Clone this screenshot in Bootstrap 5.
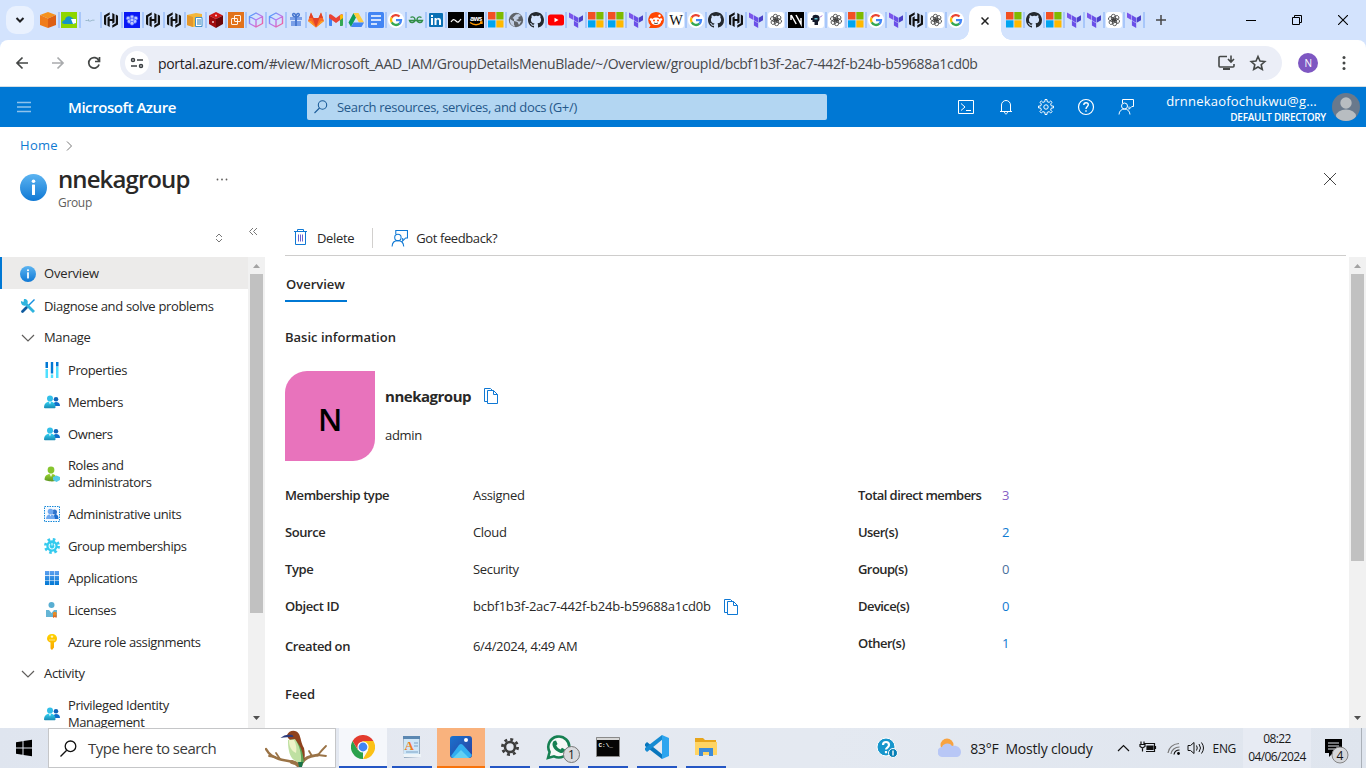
<!DOCTYPE html>
<html lang="en">
<head>
<meta charset="utf-8">
<title>nnekagroup - Microsoft Azure</title>
<link href="https://cdn.jsdelivr.net/npm/bootstrap@5.3.0/dist/css/bootstrap.min.css" rel="stylesheet">
<style>
html,body{height:768px;overflow:hidden}
body{font-family:"Open Sans","Noto Sans",sans-serif;font-size:13px;line-height:17px;letter-spacing:-.33px;color:#292827;width:1366px}
svg{display:block;flex:none}
/* browser chrome */
.tabstrip,.navwrap,.azbar,.crumbs,.bladehead,.sidetools,.cmdbar,.taskbar{flex:none}
.tabstrip{height:40px;background:#d3e3fd}
.tabsearch{width:28px;height:28px;border-radius:10px;background:#e9f1fe;margin:0 6px}
.fav{width:20px;height:16px;position:relative}
.fav.wide{width:21px}
.fav::after{content:"";position:absolute;right:1px;top:0;width:2px;height:16px;background:#a8c7fa}
.fav.last::after{display:none}
.livetab{width:32px;height:34px;margin-left:1px;margin-right:5px;background:#fff;border-radius:10px 10px 0 0;align-self:flex-end;position:relative}
.livetab::before,.livetab::after{content:"";position:absolute;bottom:0;width:10px;height:10px}
.livetab::before{left:-10px;background:radial-gradient(circle at 0 0,transparent 9.5px,#fff 10px)}
.livetab::after{right:-10px;background:radial-gradient(circle at 100% 0,transparent 9.5px,#fff 10px)}
.navwrap{height:46px;background:#d3e3fd}
.navrow{height:46px;background:#fff;border-radius:8px 8px 0 0}
.omnibox{width:1162px;height:34px;border-radius:17px;background:#ebeef7}
.siteinfo{width:24px;height:24px;background:#fff}
.urltext{font-size:14px;letter-spacing:-.32px;color:#46484b;padding-left:1px}
.urltext b{font-weight:400;color:#1f2023}
.profile{width:20px;height:20px;background:#7e57c2;color:#fff;font-size:10px}
/* portal header */
.azbar{height:41px;background:#0078d4;border-top:1px solid #d4dfe6;color:#fff}
.brandname{font-size:15px;font-weight:600;letter-spacing:-.44px;width:239px}
.azsearch{width:520px;height:26px;background:#b3d6f2;border-radius:2px;color:#25588a;letter-spacing:-.32px}
.aztools{gap:20px}
.acct{width:160px;line-height:14px;padding-top:3px;letter-spacing:.2px}
.acct .dir{font-size:10px;font-weight:600;letter-spacing:-.28px;padding-top:2px}
.azlink{color:#0f7ad2}
.crumbs{height:37px}
.bladehead{height:55px}
.bladehead h1{font-size:24px;font-weight:600;line-height:30px;letter-spacing:-.9px;color:#292827;width:153px}
.subtle{font-size:12px;line-height:16px;color:#605e5c;padding-top:1px}
/* side menu */
.sidecol{width:265px}
.sidetools{height:38px;padding-left:215px}
.sidelist{width:248px}
.menurow{height:32px;padding-left:20px;gap:8px;flex:none}
.menurow.child{padding-left:44px;letter-spacing:-.4px}
.menurow.tall{height:48px}
.menurow.group{padding-bottom:1px}
.menurow.picked{background:#ecebea;box-shadow:inset 2px 0 #0078d4;margin-bottom:1px;padding-top:1px;letter-spacing:-.17px;font-weight:500}
.track{width:17px;background:#f1f1f1;padding:2px 0 2px}
.thumb{width:13px;background:#c1c1c1}
.t1{height:339px}.t2{height:287px}
/* content */
.cmdbar{height:37px;border-bottom:1px solid #cecdcc;margin:0 20px 1px;width:1061px;padding-top:2px}
.vrule{width:1px;height:20px;background:#d2d0ce;margin:0 18px}
.semi{font-weight:600;letter-spacing:-.42px}
.sectionhead{font-weight:600;letter-spacing:0}
.pivot{width:62px;height:30px;border-bottom:2px solid #0078d4;padding:4px 0 0 1px;margin-top:15px;font-weight:600;letter-spacing:0;white-space:nowrap}
.avatarbox{width:90px;height:90px;background:#e873bc;border-radius:22px 0 22px 0;font-size:31px;font-weight:600;color:#000;padding-top:6px}
.groupname{font-size:15px;font-weight:700;letter-spacing:-.48px;padding-top:2px}
.facts{grid-template-columns:188px 1fr;grid-auto-rows:37px;width:573px}
.facts .lower{padding-top:6px}
.objid{letter-spacing:-.22px}
.counts{grid-template-columns:144px 1fr;grid-auto-rows:37px}
.counts .semi{letter-spacing:-.56px}
/* taskbar */
.taskbar{height:40px;background:linear-gradient(100deg,#dfe5ef,#e5e9f1 35%,#e4e9f1 60%,#dfe5ee);color:#191919}
.winsearch{width:288px;height:40px;background:#fff;border:1px solid #c5c6c8;font-size:15px;letter-spacing:-.52px;color:#3b3b3b;padding-left:11px;gap:11px}
.tasks{gap:9px;margin-left:7px}
.task{width:40px;height:40px;border-bottom:2px solid #2456c4;padding-bottom:1px;position:relative}
.task.focus{width:48px;margin:0 -4px;background:#f5f7fb}
.task.hot{width:48px;margin:0 -4px;background:#f9b27d;border-color:#f7730c}
.taskcount{position:absolute;left:24px;top:18px;width:17px;height:17px;background:#d9dade;border:1px solid #777;font-size:12px;letter-spacing:0}
.weather{font-size:14px;letter-spacing:-.2px}
.clock{width:68px;height:40px;font-size:12px;line-height:18px;letter-spacing:-.6px;background:#e7ebf3;padding-top:2px}
</style>
</head>
<body class="d-flex flex-column bg-white">

<svg width="0" height="0" class="position-absolute">
<defs>
<linearGradient id="gInfo" x1="0" y1="0" x2="0" y2="1"><stop offset="0" stop-color="#5cb4f1"/><stop offset="1" stop-color="#0f78d4"/></linearGradient>
<linearGradient id="gCyan" x1="0" y1="0" x2="0" y2="1"><stop offset="0" stop-color="#32d4f5"/><stop offset="1" stop-color="#198ab3"/></linearGradient>
<linearGradient id="gGreen" x1="0" y1="0" x2="0" y2="1"><stop offset="0" stop-color="#9ad52f"/><stop offset="1" stop-color="#5e9624"/></linearGradient>
<linearGradient id="gApp" x1="0" y1="0" x2="0" y2="1"><stop offset="0" stop-color="#5ea0ef"/><stop offset="1" stop-color="#0078d4"/></linearGradient>
<linearGradient id="gKey" x1="0" y1="0" x2="0" y2="1"><stop offset="0" stop-color="#ffd400"/><stop offset="1" stop-color="#f9a500"/></linearGradient>
<linearGradient id="gCube" x1="0" y1="0" x2="1" y2="1"><stop offset="0" stop-color="#32a8ff"/><stop offset=".5" stop-color="#b678f0"/><stop offset="1" stop-color="#ff5d8a"/></linearGradient>
<linearGradient id="gPhoto" x1="0" y1="0" x2="1" y2="1"><stop offset="0" stop-color="#1a73cf"/><stop offset="1" stop-color="#2b3f9e"/></linearGradient>
</defs>
<symbol id="f-box" viewBox="0 0 16 16"><path fill="#f6921e" d="M8 0l8 3-8 3.600L0 3z"/><path fill="#f07c1a" d="M0 3l8 3.600V16l-8-3z"/><path fill="#dd5f14" d="M16 3L8 6.600V16l8-3z"/></symbol>
<symbol id="f-green" viewBox="0 0 16 16"><path fill="#8ed600" d="M0 0h16v16H0z"/><path fill="#1693c9" d="M1 11c0-2 2-3 3-3 0-3 4-5 6-3l4 3v4H3z"/><path fill="#fff" d="M10 7h5v4l-3 1z"/></symbol>
<symbol id="f-wave" viewBox="0 0 16 16"><path stroke="#8dafc0" fill="none" stroke-width=".8" d="M3.500 8.500h2l1-1v1.500h2.500l1-.8h2.500"/></symbol>
<symbol id="f-h" viewBox="0 0 16 16"><path fill="#111" d="M6.700.200L1 3.500v8.800l2.200 1.300V4.800l3.500-2.100zM9.300 15.800L15 12.500V3.700l-2.200-1.300v8.800l-3.500 2.100zM4.500 5.500l2.200-1.200V7h2.600V1l2.200 1.200v8.300l-2.200 1.200V9H6.700v6l-2.200-1.200z"/></symbol>
<symbol id="f-hex" viewBox="0 0 16 16"><path fill="#0a19f5" d="M0 0h16v16H0z"/><g fill="#bdc8ff" stroke="#3a54fa" stroke-width=".7"><circle cx="8" cy="5" r="2"/><circle cx="4.200" cy="6.200" r="2"/><circle cx="11.800" cy="6.200" r="2"/><circle cx="5.500" cy="9.300" r="2.200"/><circle cx="10.500" cy="9.300" r="2.200"/><circle cx="8" cy="8" r="2"/><circle cx="8" cy="11.300" r="2"/></g></symbol>
<symbol id="f-note" viewBox="0 0 16 16"><path fill="#f3b73b" d="M0 3l9-2 6 1v11l-9 2-6-2z"/><path fill="#e4972c" d="M0 3l6 2v10l-6-2z"/><path fill="#fff" stroke="#4090c7" d="M8.500 5.500h6.500v9H8.500z"/><path stroke="#2a7fba" d="M10 8h4M10 10h4M10 12h4"/></symbol>
<symbol id="f-red" viewBox="0 0 16 16"><path fill="#d11716" d="M8 0l7 3.500-7 3.500L1 3.500z"/><path fill="#9e0b0d" d="M1 3.500L8 7v9l-7-4z"/><path fill="#6d0508" d="M15 3.500L8 7v9l7-4z"/><circle cx="5" cy="10" r="1" fill="#f0caca"/><circle cx="8" cy="3.500" r="1" fill="#f6dada"/></symbol>
<symbol id="f-ec2" viewBox="0 0 16 16"><path fill="#e2731c" d="M0 0h16v16H0z"/><g fill="none" stroke="#fff" stroke-width=".9"><rect x="6.500" y="3.500" width="6" height="6" rx=".5"/><rect x="3.500" y="6.500" width="6" height="6" rx=".5"/></g></symbol>
<symbol id="f-cube" viewBox="0 0 16 16"><path fill="none" stroke="url(#gCube)" stroke-width="1.400" stroke-linejoin="round" d="M8 1l6.500 3.500v7L8 15l-6.500-3.500v-7zM1.500 4.500L8 8l6.500-3.500M8 8v7"/></symbol>
<symbol id="f-gift" viewBox="0 0 16 16"><path fill="#7ba0e8" d="M2 5h12v3H2zM3 9h10v5H3z"/><path fill="#4978cf" d="M7 5h2v9H7z"/><path fill="none" stroke="#4978cf" stroke-width="1.500" d="M8 5C4 5 4 1 6 1.500S8 5 8 5s0-3 2-3.500S12 5 8 5"/></symbol>
<symbol id="f-gitlab" viewBox="0 0 16 16"><path fill="#fc6d26" d="M8 15.500L0 9l3-8.500L5.500 6h5L13 .5 16 9z"/><path fill="#e24329" d="M8 15.500L4.500 6h7z"/><path fill="#e24329" d="M3 .5L5.500 6H1zM13 .5L15 6h-4.500z"/><path fill="#fca326" d="M0 9l8 6.500L3 9zM16 9l-8 6.500L13 9z"/></symbol>
<symbol id="f-gmail" viewBox="0 0 16 16"><path fill="#4285f4" d="M1 4h3v10H2a1 1 0 0 1-1-1z"/><path fill="#34a853" d="M12 4h3v9a1 1 0 0 1-1 1h-2z"/><path fill="#ea4335" d="M1 3.500C1 2 3 2 4 3l4 3 4-3c1-1 3-1 3 .5V6L8 11 1 6z"/><path fill="#fbbc04" d="M12 3.500C13 2 15 2 15 4v2l-3 2z"/></symbol>
<symbol id="f-drive" viewBox="0 0 16 16"><path fill="#0f9d58" d="M5.500 1L8 5.500 3 15 .5 10.500z"/><path fill="#ffcd40" d="M5.500 1h5l5.500 9.500h-5z"/><path fill="#4285f4" d="M5.500 10.500H16L13.500 15H3z"/></symbol>
<symbol id="f-docs" viewBox="0 0 16 16"><rect width="16" height="16" rx="1.500" fill="#4285f4"/><path stroke="#fff" stroke-width="1.600" d="M3 4h10M3 8h10M3 12h6"/></symbol>
<symbol id="f-g" viewBox="0 0 16 16"><circle cx="8" cy="8" r="8" fill="#fff"/><g fill="none" stroke-width="2.300"><path stroke="#ea4335" d="M3.600 5.600A5 5 0 0 1 11.500 4.500"/><path stroke="#fbbc05" d="M3.700 10.500A5 5 0 0 1 3.600 5.500"/><path stroke="#34a853" d="M11.400 11.700A5 5 0 0 1 3.700 10.400"/><path stroke="#4285f4" d="M8 8.200h5a5 5 0 0 1-1.700 3.600"/></g></symbol>
<symbol id="f-gfg" viewBox="0 0 16 16"><g fill="none" stroke="#2f8d46" stroke-width="1.400"><path d="M2.500 5.500c2.500-1.500 4.500 0 4.500 2.500s-4.500 4-5.500.5h13c-1 3.500-5.500 2-5.500-.5s2-4 4.500-2.500"/></g></symbol>
<symbol id="f-li" viewBox="0 0 16 16"><rect x="1" y="1" width="14" height="14" rx="1" fill="#0a70b4"/><path fill="#fff" d="M3 6h2v7H3zM3 3h2v2H3zM6.500 6h2v1c1-1.700 4.500-1.600 4.500 1.500V13h-2V9c0-2-2.500-2-2.500 0v4h-2z"/></symbol>
<symbol id="f-blk" viewBox="0 0 16 16"><path d="M0 0h16v16H0z"/><path fill="none" stroke="#fff" stroke-width="1.200" d="M3 10c2-3 3-3 5-1s3 1 5-2"/></symbol>
<symbol id="f-ms" viewBox="0 0 16 16"><path fill="#f25022" d="M0 0h7.500v7.500H0z"/><path fill="#7fba00" d="M8.300 0h7.200v7.500H8.300z"/><path fill="#00a4ef" d="M0 8.300h7.500v7.200H0z"/><path fill="#ffb900" d="M8.300 8.300h7.200v7.200H8.300z"/></symbol>
<symbol id="f-globe" viewBox="0 0 16 16"><circle cx="8" cy="8" r="7.200" fill="#5f6368"/><path fill="#c3d0e5" d="M2 7l4 2.500v3l1 2C3 14 1.500 10.500 2 7zM8 2.500l3-.5 2 2-2.500 1V7L8 8l3 1.500 2.500-.5-2.500 4-1.500-3L6 9V7L4.500 6z"/></symbol>
<symbol id="f-gh" viewBox="0 0 16 16"><path fill="#24292f" d="M8 0C3.580 0 0 3.580 0 8c0 3.540 2.290 6.530 5.470 7.590.4.070.55-.17.55-.38 0-.19-.01-.82-.01-1.490-2.010.37-2.530-.49-2.690-.94-.09-.23-.48-.94-.82-1.130-.28-.15-.68-.52-.01-.53.63-.01 1.080.58 1.230.82.72 1.210 1.870.87 2.330.66.07-.52.28-.87.51-1.070-1.780-.2-3.640-.89-3.640-3.950 0-.87.31-1.590.82-2.150-.08-.2-.36-1.020.08-2.120 0 0 .67-.21 2.200.82A7.600 7.600 0 0 1 8 3.860c.68 0 1.360.09 2 .27 1.530-1.040 2.200-.82 2.200-.82.44 1.100.16 1.920.08 2.120.51.56.82 1.270.82 2.150 0 3.070-1.870 3.750-3.650 3.950.29.25.54.73.54 1.480 0 1.070-.01 1.930-.01 2.200 0 .21.15.46.55.38A8 8 0 0 0 16 8c0-4.420-3.580-8-8-8z"/></symbol>
<symbol id="f-yt" viewBox="0 0 16 16"><rect y="2.500" width="16" height="11" rx="2.500" fill="#f00"/><path fill="#fff" d="M6.500 5.700l4 2.300-4 2.300z"/></symbol>
<symbol id="f-tf" viewBox="0 0 16 16"><path fill="#7b55ea" d="M1 .5l4.400 2.500v5L1 5.500z"/><path fill="#6a50e8" d="M5.900 3.200l4.300 2.500v5L5.900 8.200zM5.900 8.800l4.300 2.500V16l-4.300-2.500z"/><path fill="#4b41c8" d="M15 3.200l-4.300 2.500v5L15 8.200z"/></symbol>
<symbol id="f-reddit" viewBox="0 0 16 16"><path fill="#ff4500" d="M8 0a8 8 0 1 1 0 16H1l1.500-2.500A8 8 0 0 1 8 0z"/><ellipse cx="8" cy="9.300" rx="5" ry="3.700" fill="#fff"/><circle cx="11.500" cy="3.800" r="1.200" fill="#fff"/><circle cx="3" cy="7.500" r="1.300" fill="#fff"/><circle cx="13" cy="7.500" r="1.300" fill="#fff"/><path fill="none" stroke="#222" stroke-width=".8" d="M6 11q2 1.200 4 0"/><circle cx="6" cy="8.500" r="1" fill="#ff4500"/><circle cx="10" cy="8.500" r="1" fill="#ff4500"/></symbol>
<symbol id="f-ai" viewBox="0 0 16 16"><rect width="16" height="16" rx="3" fill="#fff"/><g fill="none" stroke="#333" stroke-width=".75"><rect id="petal" x="5.400" y="2.300" width="4" height="6.800" rx="2"/><use href="#petal" transform="rotate(60 8 8)"/><use href="#petal" transform="rotate(120 8 8)"/><use href="#petal" transform="rotate(180 8 8)"/><use href="#petal" transform="rotate(240 8 8)"/><use href="#petal" transform="rotate(300 8 8)"/></g></symbol>
<symbol id="f-slash" viewBox="0 0 16 16"><path d="M0 0h16v16H0z"/><path stroke="#fff" stroke-width="1.500" fill="none" d="M3 3v5M3.200 3l5 9M8 3l5 9V6"/></symbol>
<symbol id="f-ninja" viewBox="0 0 16 16"><rect width="16" height="16" rx="3" fill="#fff"/><path fill="#151b2b" d="M4.500 5c0-3 6-3 7 0v3l-1.500 2v3H6.500v-3h-2zM3 6h3v2H3z"/><path fill="#62bfcf" d="M6.500 6h3v1.500h-3z"/><path stroke="#8d52c7" d="M12 5.500l2-2"/></symbol>

<symbol id="i-info" viewBox="0 0 18 18"><circle cx="9" cy="9" r="9" fill="url(#gInfo)"/><circle cx="9" cy="4.800" r="1.200" fill="#fff"/><rect x="8" y="7" width="2" height="7" rx=".4" fill="#fff"/></symbol>
<symbol id="i-tools" viewBox="0 0 16 16"><path stroke="#1490df" stroke-width="1.400" d="M14.500 1.500L8 8"/><path stroke="#0f5b9f" stroke-width="2.800" stroke-linecap="round" d="M6.500 9.500l-4 4"/><path fill="#2fb4de" d="M1 3l2.500 1L4 1c3-.3 4.500 2 3.500 4.500L15 13l-2 2-7.500-7.500C3 8.500.5 6 1 3z"/></symbol>
<symbol id="i-chev" viewBox="0 0 16 16"><path fill="none" stroke="#605e5c" stroke-width="1.200" d="M2 5l6 6 6-6"/></symbol>
<symbol id="i-props" viewBox="0 0 16 16"><path fill="#50e0ff" d="M1.500 7H4v9H1.500zM6.800 12.500h2.400V16H6.800zM12 5h2.500v11H12z"/><path fill="#0078d4" d="M1.500 0H4v6H1.500zM6.800 0h2.400v11.500H6.800zM12 0h2.500v4.500H12z"/></symbol>
<symbol id="i-people" viewBox="0 0 16 16"><circle cx="12" cy="5.300" r="2.300" fill="#0f63b8"/><path fill="#0f6fcb" d="M9 12h7c0-2.500-1.500-4-4-4-1.500 0-3 1-3 4z"/><circle cx="6" cy="4.500" r="3" fill="#32bfe8"/><path fill="url(#gCyan)" d="M0 13.500C0 10 2.300 7.500 6 7.500s5.500 2.500 5.500 6c0 .5-.5.800-1 .8H1c-.6 0-1-.3-1-.8z"/><path fill="#d5f6ff" d="M4.800 7.800h2.400L6 10.500z"/></symbol>
<symbol id="i-role" viewBox="0 0 16 16"><circle cx="7" cy="4" r="3.400" fill="#86c52e"/><path fill="url(#gGreen)" d="M.5 13.500C.7 10 3 7.800 7 7.800s5.600 2.500 5.600 5.700-11.700 1.800-12.100 0z"/><path fill="#eaf8da" d="M5.500 8h3L7 11z"/><path fill="#54cbe8" d="M9 11l3.500-1.600L16 11v3l-3.500 2L9 14z"/></symbol>
<symbol id="i-unit" viewBox="0 0 16 16"><path fill="#f6faff" stroke="#1689d8" stroke-dasharray="1.500 1" d="M.5.500h15v15H.5z"/><circle cx="10.500" cy="6" r="2.500" fill="#2f73cb"/><path fill="#1c6ccd" d="M8 13h6.500c0-3.500-1.500-5-3.500-5z"/><circle cx="6.500" cy="5.500" r="2.800" fill="#6fa8ef"/><path fill="#6fa8ef" d="M2 13c0-3.300 2-4.800 4.500-4.800S11 10 11 13z"/><path fill="#fff" d="M5.700 8.600h1.600L6.500 10.500z"/></symbol>
<symbol id="i-gearc" viewBox="0 0 16 16"><circle cx="8" cy="8" r="6.500" fill="none" stroke="#37c9ee" stroke-width="3" stroke-dasharray="2.500 2.605"/><circle cx="8" cy="8" r="5.700" fill="#32cbee"/><path fill="none" stroke="#e8fbff" stroke-width="1.100" d="M6 6a2.900 2.900 0 1 0 4 0M8 5v2.500"/></symbol>
<symbol id="i-apps" viewBox="0 0 16 16"><path fill="url(#gApp)" d="M1 1h4.300v4.300H1zM5.900 1h4.300v4.300H5.900zM10.800 1H15v4.300h-4.200zM1 5.900h4.300v4.300H1zM5.900 5.900h4.300v4.300H5.900zM10.800 5.900H15v4.300h-4.200zM1 10.800h4.300V15H1zM5.900 10.800h4.300V15H5.900zM10.800 10.800H15V15h-4.200z"/></symbol>
<symbol id="i-lic" viewBox="0 0 16 16"><circle cx="7.500" cy="3" r="3" fill="#58aed2"/><path fill="#65b5d5" d="M2 8h3l2.500 3L10 8h3v7H2z"/><path fill="#e46a1e" d="M9 13h3.500v3l-1.700-1L9 16z"/><circle cx="10.800" cy="11.700" r="2" fill="#e88a25"/></symbol>
<symbol id="i-key" viewBox="0 0 16 16"><path fill="url(#gKey)" d="M8 0c3 0 5 2 5 4.500 0 2-1 3.500-3 4v5L8 16l-1.500-1.500V8.500c-2-.5-3.500-2-3.500-4C3 2 5 0 8 0z"/><circle cx="8" cy="2.600" r="1.200" fill="#fff5c4"/><path stroke="#ffe67a" d="M5 6h6"/></symbol>
<symbol id="i-feed" viewBox="0 0 16 16"><g fill="none" stroke="currentColor"><path d="M4.500 4V.5h11v7h-1.700L11 10.300V7.500"/><circle cx="6.500" cy="7" r="3"/><path d="M1 15.500c.2-3.500 2.500-5.500 5.500-5.500s5.200 2 5.500 5.500"/></g></symbol>
<symbol id="i-copy" viewBox="0 0 16 18"><path fill="#fff" stroke="#0f78d4" d="M4.500 14.500h-3V1.500h6l2 2M4.500 3.500h6l4 4v9h-10zM10.500 3.500v4h4"/></symbol>
<symbol id="i-up" viewBox="0 0 17 15"><path fill="#a3a3a3" d="M5 9l3.500-4L12 9z"/></symbol>
<symbol id="i-down" viewBox="0 0 17 15"><path fill="#505050" d="M5 5h7l-3.500 4z"/></symbol>
</svg>

<div class="tabstrip d-flex align-items-center">
  <div class="tabsearch d-flex align-items-center justify-content-center"><svg width="10" height="8" viewBox="0 0 10 8"><path fill="none" stroke="#202124" stroke-width="2" d="M1.500 2L5 5.500 8.500 2"/></svg></div>
  <div class="fav wide"><svg width="16" height="16"><use href="#f-box"/></svg></div>
  <div class="fav wide"><svg width="16" height="16"><use href="#f-green"/></svg></div>
  <div class="fav wide"><svg width="16" height="16"><use href="#f-wave"/></svg></div>
  <div class="fav wide"><svg width="16" height="16"><use href="#f-h"/></svg></div>
  <div class="fav wide"><svg width="16" height="16"><use href="#f-hex"/></svg></div>
  <div class="fav wide"><svg width="16" height="16"><use href="#f-h"/></svg></div>
  <div class="fav wide"><svg width="16" height="16"><use href="#f-h"/></svg></div>
  <div class="fav wide"><svg width="16" height="16"><use href="#f-note"/></svg></div>
  <div class="fav"><svg width="16" height="16"><use href="#f-red"/></svg></div>
  <div class="fav"><svg width="16" height="16"><use href="#f-ec2"/></svg></div>
  <div class="fav"><svg width="16" height="16"><use href="#f-cube"/></svg></div>
  <div class="fav"><svg width="16" height="16"><use href="#f-cube"/></svg></div>
  <div class="fav"><svg width="16" height="16"><use href="#f-gift"/></svg></div>
  <div class="fav"><svg width="16" height="16"><use href="#f-gitlab"/></svg></div>
  <div class="fav"><svg width="16" height="16"><use href="#f-gmail"/></svg></div>
  <div class="fav"><svg width="16" height="16"><use href="#f-drive"/></svg></div>
  <div class="fav"><svg width="16" height="16"><use href="#f-docs"/></svg></div>
  <div class="fav"><svg width="16" height="16"><use href="#f-g"/></svg></div>
  <div class="fav"><svg width="16" height="16"><use href="#f-gfg"/></svg></div>
  <div class="fav"><svg width="16" height="16"><use href="#f-li"/></svg></div>
  <div class="fav"><svg width="16" height="16"><use href="#f-blk"/></svg></div>
  <div class="fav"><svg width="16" height="16" viewBox="0 0 16 16"><path d="M0 0h16v16H0z"/><text x="2" y="8.500" font-size="7" font-weight="700" fill="#fff" textLength="12">aws</text><path fill="none" stroke="#f90" stroke-width="1.300" d="M2 10.500c4 3 8 3 12 0M12 10h2v2"/></svg></div>
  <div class="fav"><svg width="16" height="16"><use href="#f-ms"/></svg></div>
  <div class="fav"><svg width="16" height="16"><use href="#f-globe"/></svg></div>
  <div class="fav"><svg width="16" height="16"><use href="#f-gh"/></svg></div>
  <div class="fav"><svg width="16" height="16"><use href="#f-yt"/></svg></div>
  <div class="fav"><svg width="16" height="16"><use href="#f-tf"/></svg></div>
  <div class="fav"><svg width="16" height="16"><use href="#f-ms"/></svg></div>
  <div class="fav"><svg width="16" height="16"><use href="#f-ms"/></svg></div>
  <div class="fav"><svg width="16" height="16"><use href="#f-tf"/></svg></div>
  <div class="fav"><svg width="16" height="16"><use href="#f-reddit"/></svg></div>
  <div class="fav"><svg width="16" height="16" viewBox="0 0 16 16"><rect width="16" height="16" rx="3" fill="#fff"/><text x="1.200" y="12.500" font-family="Liberation Serif" font-size="14" fill="#111" textLength="13.600" lengthAdjust="spacingAndGlyphs" letter-spacing="0">W</text></svg></div>
  <div class="fav"><svg width="16" height="16"><use href="#f-g"/></svg></div>
  <div class="fav"><svg width="16" height="16"><use href="#f-gh"/></svg></div>
  <div class="fav"><svg width="16" height="16"><use href="#f-h"/></svg></div>
  <div class="fav"><svg width="16" height="16"><use href="#f-tf"/></svg></div>
  <div class="fav"><svg width="16" height="16"><use href="#f-ai"/></svg></div>
  <div class="fav"><svg width="16" height="16"><use href="#f-slash"/></svg></div>
  <div class="fav"><svg width="16" height="16"><use href="#f-ninja"/></svg></div>
  <div class="fav"><svg width="16" height="16"><use href="#f-ai"/></svg></div>
  <div class="fav"><svg width="16" height="16"><use href="#f-ms"/></svg></div>
  <div class="fav"><svg width="16" height="16"><use href="#f-g"/></svg></div>
  <div class="fav"><svg width="16" height="16"><use href="#f-tf"/></svg></div>
  <div class="fav"><svg width="16" height="16"><use href="#f-h"/></svg></div>
  <div class="fav"><svg width="16" height="16"><use href="#f-ai"/></svg></div>
  <div class="fav last"><svg width="16" height="16"><use href="#f-g"/></svg></div>
  <div class="livetab d-flex align-items-center justify-content-center pb-2"><svg width="8" height="8" viewBox="0 0 8 8" class="mt-1"><path stroke="#222" stroke-width="1.500" d="M.5.500l7 7M7.500.500l-7 7"/></svg></div>
  <div class="fav"><svg width="16" height="16"><use href="#f-ms"/></svg></div>
  <div class="fav"><svg width="16" height="16"><use href="#f-gh"/></svg></div>
  <div class="fav"><svg width="16" height="16"><use href="#f-ms"/></svg></div>
  <div class="fav"><svg width="16" height="16"><use href="#f-tf"/></svg></div>
  <div class="fav"><svg width="16" height="16"><use href="#f-tf"/></svg></div>
  <div class="fav"><svg width="16" height="16"><use href="#f-ai"/></svg></div>
  <div class="fav"><svg width="16" height="16"><use href="#f-tf"/></svg></div>
  <svg width="10" height="10" viewBox="0 0 10 10" style="margin-left:10px"><path stroke="#474747" stroke-width="1.500" d="M5 0v10M0 5h10"/></svg>
  <div class="d-flex align-items-center ms-auto" style="gap:36px;padding-right:18px">
    <svg width="10" height="10" viewBox="0 0 10 10"><path stroke="#000" d="M0 5.500h10"/></svg>
    <svg width="10" height="10" viewBox="0 0 10 10"><path fill="none" stroke="#000" d="M.5 2.500h7v7h-7zM2.500 2V.500h7v7H8"/></svg>
    <svg width="10" height="10" viewBox="0 0 10 10"><path stroke="#000" stroke-width="1.100" d="M0 0l10 10M10 0L0 10"/></svg>
  </div>
</div>

<div class="navwrap"><div class="navrow d-flex align-items-center">
  <svg width="120" height="46" viewBox="0 0 120 46"><g fill="none" stroke-width="1.700"><path stroke="#444746" d="M28 23H17M22.500 17.500L17 23l5.500 5.500"/><path stroke="#a9abad" d="M52 23h11M57.500 17.500L63 23l-5.500 5.500"/><path stroke="#444746" d="M98.800 20.500a5.300 5.300 0 1 0 .3 4M99.500 17v4.500H95"/></g></svg>
  <div class="omnibox d-flex align-items-center">
    <div class="siteinfo rounded-circle d-flex align-items-center justify-content-center me-2" style="margin-left:5px"><svg width="14" height="12" viewBox="0 0 14 12"><g fill="none" stroke="#3c4043" stroke-width="1.500"><circle cx="3" cy="3" r="1.500"/><path d="M7 3h6M1 9h6"/><circle cx="11" cy="9" r="1.500"/></g></svg></div>
    <div class="urltext flex-grow-1 text-nowrap"><b>portal.azure.com</b>/#view/Microsoft_AAD_IAM/GroupDetailsMenuBlade/~/Overview/groupId/bcbf1b3f-2ac7-442f-b24b-b59688a1cd0b</div>
    <svg width="64" height="34" viewBox="0 0 64 34"><g fill="none" stroke="#444746" stroke-width="1.600"><path d="M9 10.500H2q-1 0-1 1V20q0 1 1 1h13q1 0 1-1v-2M13 9.500v6M10 13l3 3 3-3"/><path stroke-width="2" d="M5 23h7"/><path d="M40 10.500l2 4.500 4.800.5-3.600 3.200 1.100 4.800-4.300-2.500-4.300 2.500 1.100-4.800-3.600-3.200 4.800-.5z"/></g></svg>
  </div>
  <div class="profile rounded-circle d-flex align-items-center justify-content-center" style="margin-left:16px">N</div>
  <svg width="4" height="16" viewBox="0 0 4 16" style="margin-left:24px"><g fill="#444746"><circle cx="2" cy="2.500" r="1.500"/><circle cx="2" cy="8" r="1.500"/><circle cx="2" cy="13.500" r="1.500"/></g></svg>
</div></div>

<header class="azbar d-flex align-items-center">
  <svg width="68" height="12" viewBox="0 0 68 12"><path stroke="#8fc3ec" stroke-width="1.300" d="M17 1.500h14M17 6h14M17 10.500h14"/></svg>
  <div class="brandname">Microsoft Azure</div>
  <div class="azsearch d-flex align-items-center"><svg width="30" height="16" viewBox="0 0 30 16"><g fill="none" stroke="#1b5c99" stroke-width="1.100"><circle cx="15.500" cy="6" r="4.200"/><path d="M12.500 9l-5 5"/></g></svg>Search resources, services, and docs (G+/)</div>
  <div class="aztools d-flex align-items-center ms-auto" style="padding-right:30px">
    <svg width="20" height="20" viewBox="0 0 20 20"><g fill="none" stroke="#fff"><path d="M2.500 3.500h15v13h-15zM5 6.500l4 3.500-4 3.500M10 13.500h5"/></g></svg>
    <svg width="20" height="20" viewBox="0 0 20 20"><g fill="none" stroke="#fff"><path d="M5.500 14V8a4.500 4.500 0 0 1 9 0v6M4 14.500h12M8.500 15c0 2.500 3 2.500 3 0"/></g></svg>
    <svg width="20" height="20" viewBox="0 0 20 20"><g fill="none" stroke="#fff"><circle cx="10" cy="10" r="2.200"/><path stroke-linejoin="round" d="M8.900 4.600l.1-2.100h2l.1 2.100 2 .8 1.600-1.400 1.400 1.400-1.500 1.600.8 2 2.100.1v1.800l-2.100.1-.8 2 1.500 1.600-1.400 1.400-1.600-1.400-2 .8-.1 2.100H9l-.1-2.100-2-.8L5.300 16l-1.400-1.400L5.400 13l-.8-2-2.100-.1V9.100L4.600 9l.8-2-1.500-1.600L5.300 4l1.600 1.400z"/></g></svg>
    <svg width="20" height="20" viewBox="0 0 20 20"><circle cx="10" cy="10" r="7.500" fill="none" stroke="#fff" stroke-width="1.200"/><path fill="none" stroke="#fff" stroke-width="1.400" d="M7.800 8c0-3 4.500-2.800 4.500-.2C12.300 9.500 10 9.500 10 12M10 13.200v1.600"/></svg>
    <svg width="20" height="20" viewBox="0 0 20 20" color="#fff"><use href="#i-feed" x="2" y="2" width="16" height="16"/></svg>
  </div>
  <div class="acct text-end"><div style="padding-right:9px">drnnekaofochukwu@g...</div><div class="dir">DEFAULT DIRECTORY</div></div>
  <svg width="40" height="40" viewBox="0 0 40 40"><clipPath id="avc"><circle cx="20" cy="20" r="14"/></clipPath><circle cx="20" cy="20" r="14" fill="#69798c"/><g fill="#b8bdc1" clip-path="url(#avc)"><circle cx="20" cy="16" r="5.700"/><ellipse cx="20" cy="29" rx="10" ry="6.500"/></g></svg>
</header>

<main class="flex-grow-1 d-flex flex-column" style="min-height:0;flex-basis:0">
  <nav class="crumbs d-flex align-items-center ps-3"><span class="azlink ms-1" style="letter-spacing:.3px">Home</span><svg width="7" height="10" viewBox="0 0 7 10" class="ms-2"><path fill="none" stroke="#777" d="M1 .5L5.500 5 1 9.500"/></svg></nav>
  <div class="bladehead d-flex ps-3">
    <svg width="27" height="27" class="ms-1" style="margin-top:10px;margin-right:7px"><use href="#i-info"/></svg>
    <div class="ps-1"><h1 class="mb-0">nnekagroup</h1><div class="subtle">Group</div></div>
    <svg width="14" height="30" viewBox="0 0 14 30" class="ms-1"><g fill="#605e5c"><circle cx="2.500" cy="15.500" r=".9"/><circle cx="7" cy="15.500" r=".9"/><circle cx="11.500" cy="15.500" r=".9"/></g></svg>
    <svg width="12" height="12" viewBox="0 0 12 12" class="ms-auto" style="margin-top:9px;margin-right:30px"><path stroke="#444" d="M0 0l12 12M12 0L0 12"/></svg>
  </div>
  <div class="d-flex flex-grow-1" style="min-height:0;flex-basis:0">
    <aside class="sidecol d-flex flex-column">
      <div class="sidetools d-flex"><svg width="44" height="38" viewBox="0 0 44 38"><g fill="none" stroke="#777"><path d="M1 18l3-3 3 3M1 20l3 3 3-3M38 9l-3.500 3.500L38 16M42 9l-3.500 3.500L42 16"/></g></svg></div>
      <div class="d-flex flex-grow-1 overflow-hidden">
        <div class="sidelist d-flex flex-column overflow-hidden">
          <div class="menurow picked d-flex align-items-center"><svg width="16" height="16"><use href="#i-info"/></svg>Overview</div>
          <div class="menurow d-flex align-items-center"><svg width="16" height="16"><use href="#i-tools"/></svg>Diagnose and solve problems</div>
          <div class="menurow group d-flex align-items-center"><svg width="16" height="16"><use href="#i-chev"/></svg>Manage</div>
          <div class="menurow child d-flex align-items-center"><svg width="16" height="16"><use href="#i-props"/></svg>Properties</div>
          <div class="menurow child d-flex align-items-center"><svg width="16" height="16"><use href="#i-people"/></svg>Members</div>
          <div class="menurow child d-flex align-items-center"><svg width="16" height="16"><use href="#i-people"/></svg>Owners</div>
          <div class="menurow child tall d-flex align-items-center"><svg width="16" height="16"><use href="#i-role"/></svg><span>Roles and<br>administrators</span></div>
          <div class="menurow child d-flex align-items-center"><svg width="16" height="16"><use href="#i-unit"/></svg>Administrative units</div>
          <div class="menurow child d-flex align-items-center"><svg width="16" height="16"><use href="#i-gearc"/></svg>Group memberships</div>
          <div class="menurow child d-flex align-items-center"><svg width="16" height="16"><use href="#i-apps"/></svg>Applications</div>
          <div class="menurow child d-flex align-items-center"><svg width="16" height="16"><use href="#i-lic"/></svg>Licenses</div>
          <div class="menurow child d-flex align-items-center"><svg width="16" height="16"><use href="#i-key"/></svg>Azure role assignments</div>
          <div class="menurow group d-flex align-items-center"><svg width="16" height="16"><use href="#i-chev"/></svg>Activity</div>
          <div class="menurow child tall d-flex align-items-center"><svg width="16" height="16"><use href="#i-people"/></svg><span>Privileged Identity<br>Management</span></div>
        </div>
        <div class="track d-flex flex-column align-items-center"><svg width="17" height="15"><use href="#i-up"/></svg><div class="thumb t1"></div><svg width="17" height="15" class="mt-auto"><use href="#i-down"/></svg></div>
      </div>
    </aside>
    <section class="d-flex flex-column flex-grow-1">
      <div class="cmdbar d-flex align-items-center">
        <svg width="32" height="18" viewBox="0 0 32 18"><g fill="none" stroke="#0f78d4"><path d="M9 2.500h13M12.500 2V.500h6V2M10.500 3v12.500h10V3"/><path stroke="#6b62cf" d="M13.500 5.500v7M15.500 5.500v7M17.500 5.500v7"/></g></svg>Delete
        <div class="vrule"></div>
        <svg width="17" height="17" viewBox="0 0 16 16" color="#0f78d4"><use href="#i-feed"/></svg><span class="ms-2" style="letter-spacing:-.4px">Got feedback?</span>
      </div>
      <div class="d-flex flex-grow-1 overflow-hidden">
        <div class="flex-grow-1 ps-3 ms-1">
          <div class="pivot">Overview</div>
          <div class="sectionhead" style="margin-top:27px">Basic information</div>
          <div class="d-flex" style="margin-top:25px">
            <div class="avatarbox d-flex align-items-center justify-content-center">N</div>
            <div style="padding:15px 0 0 10px">
              <div class="d-flex align-items-center"><span class="groupname">nnekagroup</span><svg width="16" height="18" style="margin-left:12px"><use href="#i-copy"/></svg></div>
              <div style="margin-top:22px">admin</div>
            </div>
          </div>
          <div class="d-flex" style="margin-top:16px">
            <div class="facts d-grid align-items-center">
              <div class="semi">Membership type</div><div>Assigned</div>
              <div class="semi">Source</div><div>Cloud</div>
              <div class="semi">Type</div><div>Security</div>
              <div class="semi">Object ID</div><div class="d-flex align-items-center gap-2"><span class="objid">bcbf1b3f-2ac7-442f-b24b-b59688a1cd0b</span><svg width="16" height="18" class="ms-1"><use href="#i-copy"/></svg></div>
              <div class="semi lower">Created on</div><div class="lower">6/4/2024, 4:49 AM</div>
            </div>
            <div class="counts d-grid align-items-center">
              <div class="semi">Total direct members</div><div style="color:#8661c5">3</div>
              <div class="semi">User(s)</div><div class="azlink">2</div>
              <div class="semi">Group(s)</div><div style="color:#4a6f9c">0</div>
              <div class="semi">Device(s)</div><div class="azlink">0</div>
              <div class="semi">Other(s)</div><div class="azlink">1</div>
            </div>
          </div>
          <div class="sectionhead" style="margin-top:24px">Feed</div>
        </div>
        <div class="track d-flex flex-column align-items-center"><svg width="17" height="15"><use href="#i-up"/></svg><div class="thumb t2"></div><svg width="17" height="15" class="mt-auto"><use href="#i-down"/></svg></div>
      </div>
    </section>
  </div>
</main>

<footer class="taskbar d-flex align-items-center">
  <svg width="48" height="40" viewBox="0 0 48 40"><path d="M16 14.200l6.500-1v6.300H16zM23.500 13l8.500-1.200v7.700h-8.500zM16 20.500h6.500v6.300l-6.500-1zM23.500 20.500H32v7.700L23.500 27z"/></svg>
  <div class="winsearch d-flex align-items-center">
    <svg width="17" height="17" viewBox="0 0 17 17"><g fill="none" stroke="#111" stroke-width="1.300"><circle cx="10.500" cy="6.300" r="5.300"/><path d="M6.700 10.300L.5 16.500"/></g></svg>Type here to search
    <svg width="64" height="38" viewBox="0 0 64 38" class="ms-auto" style="margin-right:6px"><g fill="none" stroke="#9a7346" stroke-linecap="round"><path stroke-width="2.500" d="M1 20c4 7 8 8 13 10s11 1 15 4"/><path stroke-width="4" d="M27 33q6 1 8 6"/><path stroke-width="3" d="M36 36c3-9 12-9 17-10"/><path stroke-width="1.800" d="M53 26c3-4 5-6 8-9M10 28l-6-1M15 30l-4-6M47 27l-3-5M53 26l8 1"/></g><path fill="#8f421d" d="M22 6c2-5 9-6 12-1 2 4 2 9 5 14 1 5 1 9 0 13l-4 0-6-17-6-6z"/><path fill="#5fa457" d="M31 12c5 5 7 12 8 21l-3 2-6-10z"/><path fill="#bfe0a2" d="M23 11l7-1c4 6 7 14 6 24-7-1-11-6-12-12-1-4-1-8-1-11z"/><path fill="#eef3c9" d="M24 11l5 0c2 4 3 8 2 13-5-2-7-7-7-13z"/><path fill="#2c3a7a" d="M15.500 9c3-3 7-4 12-3l1 2c-5 0-9 0-13 1z"/><path fill="#187449" d="M33 33h5l-1 5h-3z"/></svg>
  </div>
  <div class="tasks d-flex">
    <div class="task focus d-flex align-items-center justify-content-center"><svg width="24" height="24" viewBox="0 0 24 24"><path fill="#2ba24c" d="M12 12v12A12 12 0 0 1 1.600 6l5.300 9z"/><path fill="#fbc116" d="M12 12V6h10.400A12 12 0 0 1 12 24l5.200-9z"/><path fill="#e33b2e" d="M12 6h10.400A12 12 0 0 0 1.600 6L7 15z"/><circle cx="12" cy="12" r="5.600" fill="#fff"/><circle cx="12" cy="12" r="4.400" fill="#4285f4"/></svg></div>
    <div class="task d-flex align-items-center justify-content-center"><svg width="22" height="24" viewBox="0 0 22 24"><path fill="#94a9bd" d="M2 1h17v21l-16 1z"/><path fill="#cfe6f7" d="M3 4h15v16H3z"/><path fill="#5b87b1" d="M2 1h17v3H2z"/><text x="3.500" y="15" font-family="Liberation Serif" font-size="13" font-weight="700" fill="#ee7d21">A</text><path stroke="#7aa1c4" d="M13 8h4M13 11h4M5 17h12"/><path fill="#eef4f8" d="M2 19h18v3H3z"/></svg></div>
    <div class="task hot d-flex align-items-center justify-content-center"><svg width="22" height="22" viewBox="0 0 22 22"><rect width="22" height="22" rx="3" fill="url(#gPhoto)"/><path fill="#32aef0" d="M1 20L9 9q2-2 4 0l9 10q-1 3-3 3H3q-1 0-2-2z"/><path fill="#62d1f4" d="M3 22l8-8 8 8z"/><circle cx="16" cy="4" r="2" fill="#fff"/></svg></div>
    <div class="task d-flex align-items-center justify-content-center"><svg width="18" height="18" viewBox="0 0 18 18"><circle cx="9" cy="9" r="5" fill="none" stroke="#3d3d3d" stroke-width="2.600"/><circle cx="9" cy="9" r="7.600" fill="none" stroke="#3d3d3d" stroke-width="2.800" stroke-dasharray="2.900 3.070"/></svg></div>
    <div class="task d-flex align-items-center justify-content-center"><svg width="26" height="26" viewBox="0 0 26 26"><path fill="#f6f9f7" stroke="#168052" stroke-width="2.600" d="M2 24l1.600-6A10.500 10.500 0 1 1 8 22.300z"/><path fill="#168052" d="M8 7l2-.5 1.500 3.500-1.300 1.500c1 2 2.500 3.200 4.300 4l1.500-1.700L19 15.500c0 3-3 4-5 3.200-4-1.500-7-4.500-7.500-8C6.400 9 7 7.500 8 7z"/></svg><span class="taskcount rounded-circle d-flex align-items-center justify-content-center">1</span></div>
    <div class="task d-flex align-items-center justify-content-center"><svg width="24" height="20" viewBox="0 0 24 20"><path fill="#050505" stroke="#8a8a8a" d="M.5.500h23v19H.5z"/><path fill="#d7d7d7" d="M1 1h22v2H1z"/><text x="2.500" y="9.500" font-family="Liberation Mono" font-size="6" font-weight="700" fill="#fff" letter-spacing="0">C:\_</text></svg></div>
    <div class="task d-flex align-items-center justify-content-center"><svg width="24" height="24" viewBox="0 0 24 24"><path fill="#0876bd" d="M0 9l2-2 16 13-1 4L0 11z"/><path fill="#168bd2" d="M0 15l2 2L18 4l-1-4L0 13z"/><path fill="#2da5ef" d="M17 0l7 3v18l-7 3z"/><path fill="#e5eaf2" d="M17 7v10l-7-5z"/></svg></div>
    <div class="task d-flex align-items-center justify-content-center"><svg width="22" height="20" viewBox="0 0 22 20"><path fill="#e7a51c" d="M0 1h8l2 2h11v4H0z"/><path fill="#ffd463" d="M0 5h22v13H0z"/><path fill="#3c8bd9" d="M4 11h14v8h-4v-4H8v4H4z"/></svg></div>
  </div>
  <div class="d-flex align-items-center ms-auto">
    <svg width="22" height="22" viewBox="0 0 22 22"><circle cx="10" cy="10" r="9" fill="#1796cc" stroke="#fff"/><path fill="none" stroke="#fff" stroke-width="2.200" d="M7 8c0-4 6-4 6 0 0 2.500-3 2.500-3 4.500M10 14v2.200"/><circle cx="17" cy="16" r="4.500" fill="#077fb6" stroke="#fff"/><path stroke="#fff" stroke-width="1.400" d="M17 13.500v5"/></svg>
    <svg width="24" height="20" viewBox="0 0 24 20" style="margin:0 8px 0 40px"><circle cx="9" cy="7" r="6.500" fill="#f8a341"/><path fill="#b8c7f6" d="M5 19a5 5 0 0 1-1-10c1-4 8-5 10-1 5-1 9 2 9 6 0 3-2 5-5 5z"/></svg>
    <div class="weather text-nowrap">83°F&nbsp; Mostly cloudy</div>
    <svg width="90" height="20" viewBox="0 0 90 20" style="margin-left:23px"><g fill="none" stroke="#111" stroke-width="1.200"><path d="M2 13l5.500-5.500L13 13"/><path d="M27.500 5.500h11v8H30M39.500 8v3M25 3.500v2.500M28 3.500v2.500M24 6.500h5v2l-2.500 1.500L24 8.500zM26.500 10v3.500"/><path fill="#111" d="M31 8h6v3.500h-6z"/><path stroke="#777" d="M52 15C53 9 57 6 63 5.500M55 16c.5-4 4-7 8.500-7"/><path d="M58 16.500c.5-3 2.500-4.500 5.500-4.500"/><path stroke-width="1" d="M72 7.500h2.500L78 4.500v11l-3.500-3H72zM80.500 7.500q1.500 2.500 0 5M83 6q3 4 0 8M85.500 4.500q4 5.500 0 11"/></g><circle cx="62.500" cy="15.500" r="1.400"/></svg>
    <span style="font-size:12px;margin-left:7px">ENG</span>
    <div class="clock text-center" style="margin-left:7px">08:22<br>04/06/2024</div>
    <svg width="55" height="40" viewBox="0 0 55 40"><path d="M14 11h17v14h-9l-4 4v-4h-4z"/><path stroke="#e3e7ee" stroke-width="1.200" d="M17 15h11M17 18h11M17 21h8"/><circle cx="29" cy="27" r="8" fill="#d5d7db" stroke="#858585"/><text x="25.500" y="31.500" font-size="12" fill="#111">4</text><path stroke="#aab0b8" d="M50.500 0v40"/></svg>
  </div>
</footer>
<script src="https://cdn.jsdelivr.net/npm/bootstrap@5.3.0/dist/js/bootstrap.bundle.min.js"></script>
</body>
</html>
